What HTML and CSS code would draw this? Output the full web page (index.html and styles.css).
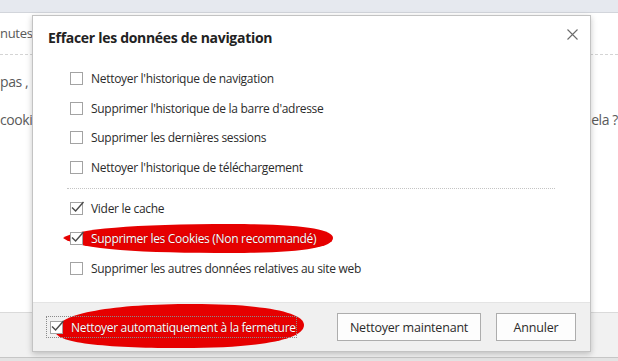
FILE: index.html
```html
<!DOCTYPE html>
<html lang="fr">
<head>
    <meta charset="UTF-8">
    <title>Effacer les données de navigation</title>
    <link rel="stylesheet" href="styles.css">
</head>
<body>
    <!--page behind the dialog-->
    <div class="page">
        <div class="topbar"></div>
        <div class="bg-content">
            <p class="bg-head">nutes</p>
            <p class="bg-text bg-first">pas ,</p>
            <div class="bg-row">
                <p class="bg-text">cookie</p>
                <p class="bg-text">ela ?</p>
            </div>
        </div>
        <div class="bg-band"></div>
        <div class="bg-bottom"></div>
    </div>

    <!--the dialog-->
    <div class="dialog">
        <div class="dlg-head">
            <h1>Effacer les données de navigation</h1>
            <svg class="close" width="11" height="11" viewBox="0 0 11 11">
                <path d="M0.5 0.5 L10.5 10.5 M10.5 0.5 L0.5 10.5" stroke="#6b6b6b" stroke-width="1.1" fill="none"/>
            </svg>
        </div>
        <div class="dlg-body">
            <div class="group group-top">
                <div class="row"><span class="box"></span><span class="lbl">Nettoyer l'historique de navigation</span></div>
                <div class="row"><span class="box"></span><span class="lbl">Supprimer l'historique de la barre d'adresse</span></div>
                <div class="row"><span class="box"></span><span class="lbl">Supprimer les dernières sessions</span></div>
                <div class="row"><span class="box"></span><span class="lbl">Nettoyer l'historique de téléchargement</span></div>
            </div>
            <div class="sep"></div>
            <div class="group group-bottom">
                <div class="row">
                    <span class="box"><svg width="15" height="14" viewBox="0 0 15 14"><path d="M2 7.5 L5.6 11 L13.5 2" stroke="#4a4a4a" stroke-width="1.4" fill="none"/></svg></span>
                    <span class="lbl">Vider le cache</span>
                </div>
                <div class="row marked">
                    <svg class="mark mark-one" width="272" height="31" viewBox="0 0 272 31">
                        <path d="M1 15 C14 6 70 1 170 1 C240 1 271 6 271 15 C271 25 236 30 170 30 C80 30 18 27 1 15 Z" fill="#e60000"/>
                    </svg>
                    <span class="box"><svg width="15" height="14" viewBox="0 0 15 14"><path d="M2 7.5 L5.6 11 L13.5 2" stroke="#4a4a4a" stroke-width="1.4" fill="none"/></svg></span>
                    <span class="lbl on-red">Supprimer les Cookies (Non recommandé)</span>
                </div>
                <div class="row"><span class="box"></span><span class="lbl">Supprimer les autres données relatives au site web</span></div>
            </div>
        </div>
        <div class="dlg-foot">
            <div class="auto">
                <svg class="mark mark-two" width="252" height="46" viewBox="0 0 252 46">
                    <path d="M2 27 C6 10 60 1 140 1 C205 1 251 8 251 22 C251 37 205 45 130 45 C60 45 0 41 2 27 Z" fill="#e60000"/>
                </svg>
                <span class="focus">
                    <span class="box"><svg width="15" height="14" viewBox="0 0 15 14"><path d="M2 7.5 L5.6 11 L13.5 2" stroke="#4a4a4a" stroke-width="1.4" fill="none"/></svg></span>
                    <span class="lbl on-red">Nettoyer automatiquement à la fermeture</span>
                </span>
            </div>
            <div class="buttons">
                <button class="btn btn-wide">Nettoyer maintenant</button>
                <button class="btn">Annuler</button>
            </div>
        </div>
    </div>
</body>
</html>
```

FILE: styles.css
```css
*{
    margin: 0;
    box-sizing: border-box;
}
body{
    width: 618px;
    height: 361px;
    overflow: hidden;
    position: relative;
    background: #ffffff;
    font-family: "Open Sans", "Noto Sans", sans-serif;
}

/* page behind */
.page{
    display: flex;
    flex-direction: column;
    height: 361px;
}
.topbar{
    height: 13px;
    background-color: #e6e9ef;
    border-bottom: 1px solid #d2d5db;
}
.bg-content{
    height: 299px;
    color: #5a5a5a;
}
.bg-head{
    height: 42px;
    line-height: 40px;
    font-size: 13px;
    letter-spacing: -0.3px;
    border-bottom: 1px dashed #d4d4d4;
}
.bg-text{
    font-size: 14px;
    line-height: 20px;
    letter-spacing: -0.4px;
}
.bg-first{
    margin-top: 17px;
}
.bg-row{
    display: flex;
    justify-content: space-between;
    margin-top: 18px;
}
.bg-band{
    height: 45px;
    background-color: #f1f1f1;
    border-top: 1px solid #dadada;
}
.bg-bottom{
    flex: 1;
    background-color: #e3e3e3;
    border-top: 1px solid #c6c6c6;
}

/* dialog */
.dialog{
    position: absolute;
    left: 32px;
    top: 15px;
    width: 559px;
    height: 337px;
    background-color: #ffffff;
    border: 1px solid #c3c3c3;
    box-shadow: 0 2px 6px rgba(0, 0, 0, 0.22);
    display: flex;
    flex-direction: column;
}
.dlg-head{
    display: flex;
    justify-content: space-between;
    padding: 12px 12px 0 15px;
}
h1{
    font-size: 14px;
    line-height: 20px;
    font-weight: 700;
    letter-spacing: -0.3px;
    color: #222222;
}
.close{
    margin-top: 1px;
}
.dlg-body{
    flex: 1;
    padding: 16px 0 0 37px;
}
.group-top .row{
    height: 29.5px;
}
.group-bottom .row{
    height: 30px;
}
.row{
    display: flex;
    align-items: center;
    position: relative;
}
.box{
    position: relative;
    z-index: 1;
    width: 13px;
    height: 13px;
    border: 1px solid #a3a3a3;
    background-color: #ffffff;
    margin-right: 8px;
    flex-shrink: 0;
}
.box svg{
    position: absolute;
    left: -1px;
    top: -3px;
}
.lbl{
    position: relative;
    z-index: 1;
    font-size: 12px;
    letter-spacing: -0.3px;
    color: #2b2b2b;
    white-space: nowrap;
}
.lbl.on-red{
    color: #ffffff;
    text-shadow: 0 0 1px #7a0000;
}
.sep{
    width: 488px;
    margin: 6px 0 4px -3px;
    border-top: 1px dotted #c4c4c4;
}
.mark{
    position: absolute;
}
.mark-one{
    left: -8px;
    top: 0;
}

/* footer */
.dlg-foot{
    height: 49px;
    background-color: #f0f0f0;
    border-top: 1px solid #e4e4e4;
    display: flex;
    align-items: center;
    justify-content: space-between;
    padding: 0 14px 0 13px;
}
.auto{
    position: relative;
}
.mark-two{
    left: 7px;
    top: -13px;
}
.focus{
    position: relative;
    display: flex;
    align-items: center;
    height: 22px;
    width: 251px;
    padding-left: 3px;
    border: 1px dotted #8a8a8a;
}
.focus .box{
    margin-right: 8px;
}
.buttons{
    display: flex;
    gap: 15px;
}
.btn{
    height: 28px;
    width: 80px;
    background-color: #fdfdfd;
    border: 1px solid #adadad;
    font-family: "Open Sans", "Noto Sans", sans-serif;
    font-size: 12.5px;
    letter-spacing: -0.2px;
    color: #2b2b2b;
}
.btn-wide{
    width: 144px;
}
```
